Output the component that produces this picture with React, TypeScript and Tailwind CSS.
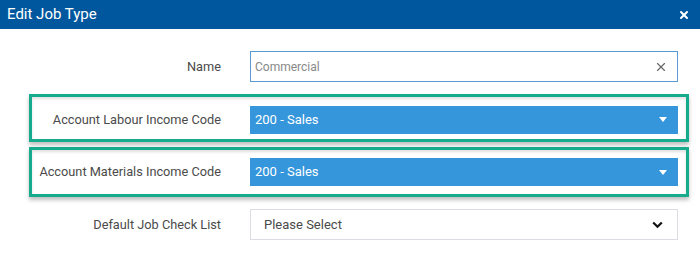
import { X } from 'lucide-react'

const font = { fontFamily: 'Roboto, "Liberation Sans", sans-serif' }

function Caret() {
  return (
    <svg width="10" height="7" viewBox="0 0 10 7" className="mr-[10px]">
      <path d="M1 1h8L5 6z" fill="#fff" />
    </svg>
  )
}

function BlueSelect({ value }: { value: string }) {
  return (
    <div className="flex h-[28px] w-[428px] items-center justify-between bg-[#3596db] pl-[5px] text-[13px] text-white">
      <span>{value}</span>
      <Caret />
    </div>
  )
}

function Highlighted({ label, value, className }: { label: string; value: string; className?: string }) {
  return (
    <div
      className={`ml-[29px] flex w-[660px] items-center border-[3px] border-[#16ab8c] shadow-[0_3px_4px_rgba(0,0,0,0.25),inset_0_2px_3px_rgba(0,0,0,0.12)] ${className ?? ''}`}
    >
      <div className="w-[189px] text-right text-[12.75px] text-[#4a4a4a]">{label}</div>
      <div className="ml-[29px]">
        <BlueSelect value={value} />
      </div>
    </div>
  )
}

export default function App() {
  return (
    <div className="h-[254px] w-[700px] overflow-hidden bg-white" style={font}>
      <div className="flex h-[29px] items-center justify-between bg-[#00579e] pl-[7px] pr-[10px] text-[15px] text-white">
        <span>Edit Job Type</span>
        <X size={12} strokeWidth={4} />
      </div>

      <div className="mt-[22px] flex items-center">
        <div className="w-[221px] text-right text-[12.75px] text-[#4a4a4a]">Name</div>
        <div className="ml-[29px] flex h-[31px] w-[428px] items-center justify-between border border-[#5c9bd1] pl-[4px] pr-[9px] text-[12px] text-[#888]">
          <span>Commercial</span>
          <X size={14} strokeWidth={2} className="text-[#666]" />
        </div>
      </div>

      <Highlighted label="Account Labour Income Code" value="200 - Sales" className="mt-[12px] h-[48px] pt-[3px]" />
      <Highlighted label="Account Materials Income Code" value="200 - Sales" className="mt-[5px] h-[50px]" />

      <div className="mt-[12px] flex items-center">
        <div className="w-[221px] text-right text-[12.75px] text-[#4a4a4a]">Default Job Check List</div>
        <div className="ml-[29px] flex h-[31px] w-[428px] items-center justify-between border border-[#dcdce4] pl-[13px] pr-[14px] text-[13px] text-[#4a4a4a]">
          <span>Please Select</span>
          <svg width="11" height="8" viewBox="0 0 11 8">
            <path d="M1.2 1.5l4.3 4.3 4.3-4.3" fill="none" stroke="#111" strokeWidth="2.2" />
          </svg>
        </div>
      </div>
    </div>
  )
}
